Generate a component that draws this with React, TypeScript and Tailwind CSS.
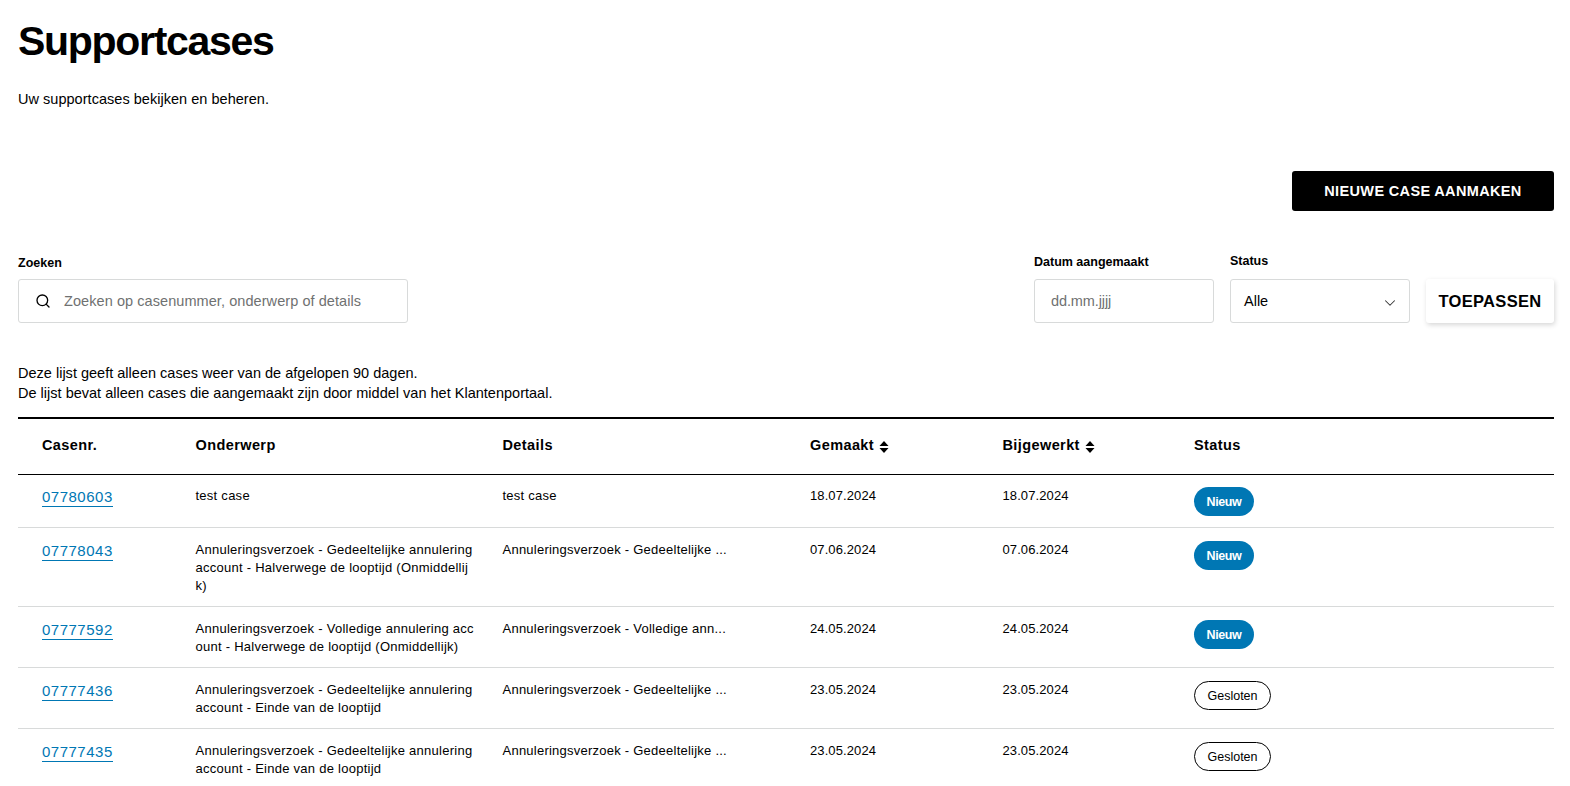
import { ChevronDown, Search } from 'lucide-react';

const cases = [
  { id: '07780603', subject: ['test case'], details: 'test case', created: '18.07.2024', updated: '18.07.2024', status: 'Nieuw', row: 'h-[53px] pt-3' },
  { id: '07778043', subject: ['Annuleringsverzoek - Gedeeltelijke annulering', 'account - Halverwege de looptijd (Onmiddellij', 'k)'], details: 'Annuleringsverzoek - Gedeeltelijke ...', created: '07.06.2024', updated: '07.06.2024', status: 'Nieuw', row: 'h-[79px] pt-[13px]' },
  { id: '07777592', subject: ['Annuleringsverzoek - Volledige annulering acc', 'ount - Halverwege de looptijd (Onmiddellijk)'], details: 'Annuleringsverzoek - Volledige ann...', created: '24.05.2024', updated: '24.05.2024', status: 'Nieuw', row: 'h-[61px] pt-[13px]' },
  { id: '07777436', subject: ['Annuleringsverzoek - Gedeeltelijke annulering', 'account - Einde van de looptijd'], details: 'Annuleringsverzoek - Gedeeltelijke ...', created: '23.05.2024', updated: '23.05.2024', status: 'Gesloten', row: 'h-[61px] pt-[13px]' },
  { id: '07777435', subject: ['Annuleringsverzoek - Gedeeltelijke annulering', 'account - Einde van de looptijd'], details: 'Annuleringsverzoek - Gedeeltelijke ...', created: '23.05.2024', updated: '23.05.2024', status: 'Gesloten', row: 'h-[61px] pt-[13px]' },
];

const gridCols = 'grid grid-cols-[153.5px_307px_307.5px_192.5px_191.5px_1fr] pl-6';

function SortIcon() {
  return (
    <svg width="10" height="12" viewBox="0 0 10 12" className="ml-[5px] mt-px" fill="#000">
      <path d="M5 0 L9.5 5 H0.5 Z" />
      <path d="M5 12 L9.5 7 H0.5 Z" />
    </svg>
  );
}

function StatusBadge({ status }: { status: string }) {
  if (status === 'Nieuw') {
    return (
      <span className="flex h-[29px] w-[60px] items-center justify-center rounded-full bg-[#0077b4] text-[12.5px] font-bold tracking-[-0.4px] text-white">
        {status}
      </span>
    );
  }
  return (
    <span className="flex h-[29px] w-[77px] items-center justify-center rounded-full border border-black text-[12.5px] tracking-normal text-black">
      {status}
    </span>
  );
}

export default function App() {
  return (
    <div className="h-[786px] overflow-hidden bg-white pr-4 pl-[18px] font-['Liberation_Sans',sans-serif] text-black">
      <h1 className="pt-[18px] text-[41px] leading-[47px] font-bold tracking-[-1.3px]">Supportcases</h1>
      <p className="mt-6 text-[14.5px] leading-[20px] tracking-[0.03px]">Uw supportcases bekijken en beheren.</p>

      <div className="mt-[62px] flex justify-end">
        <button className="h-10 w-[262px] rounded-[3px] bg-black pt-px text-[14.5px] font-bold tracking-[0.35px] text-white">
          NIEUWE CASE AANMAKEN
        </button>
      </div>

      {/* Filters */}
      <div className="mt-[42px] flex items-end">
        <div>
          <label className="block text-[12.5px] leading-[16px] font-bold">Zoeken</label>
          <div className="mt-2 flex h-11 w-[390px] items-center rounded-[3px] border border-[#d8dada] pl-4">
            <Search className="h-4 w-4 text-black" strokeWidth={2} />
            <span className="ml-[13px] pt-px text-[14.5px] tracking-[0.07px] text-[#6f7171]">Zoeken op casenummer, onderwerp of details</span>
          </div>
        </div>
        <div className="ml-auto">
          <label className="block text-[12.5px] leading-[16px] font-bold">Datum aangemaakt</label>
          <div className="mt-[9px] flex h-11 w-[180px] items-center rounded-[3px] border border-[#d8dada] pt-px pl-[16px] text-[14.5px] tracking-[-0.1px] text-[#6f7171]">
            dd.mm.jjjj
          </div>
        </div>
        <div className="ml-4">
          <label className="block text-[12.5px] leading-[16px] font-bold">Status</label>
          <div className="mt-[10px] flex h-11 w-[180px] items-center justify-between rounded-[3px] border border-[#d8dada] pt-px pr-[10px] pl-[13px] text-[14.5px]">
            Alle
            <ChevronDown className="mt-0.5 h-[18px] w-[18px] text-[#333]" strokeWidth={1.4} />
          </div>
        </div>
        <button className="ml-4 h-11 w-[128px] rounded-[3px] bg-white text-[16.5px] font-bold tracking-[0.3px] shadow-[1px_2px_5px_rgba(0,0,0,0.16)]">
          TOEPASSEN
        </button>
      </div>

      <p className="mt-[40px] text-[14.5px] leading-[20px] tracking-[0.01px]">
        Deze lijst geeft alleen cases weer van de afgelopen 90 dagen.
        <br />
        De lijst bevat alleen cases die aangemaakt zijn door middel van het Klantenportaal.
      </p>

      {/* Table */}
      <div className="mt-[14px] border-t-2 border-black">
        <div className={`${gridCols} h-14 items-center border-b border-black pb-px text-[14.5px] font-bold tracking-[0.4px]`}>
          <span>Casenr.</span>
          <span>Onderwerp</span>
          <span>Details</span>
          <span className="flex items-center">Gemaakt<SortIcon /></span>
          <span className="flex items-center">Bijgewerkt<SortIcon /></span>
          <span>Status</span>
        </div>
        {cases.map((c) => (
          <div key={c.id} className={`${gridCols} ${c.row} border-b border-[#d8dada] text-[13px] leading-[18px]`}>
            <div>
              <a href="#" className="mt-px inline-block border-b border-[#0077b4] text-[15px] leading-[18px] tracking-[0.5px] text-[#0077b4]">{c.id}</a>
            </div>
            <div className="whitespace-nowrap tracking-[0.26px]">
              {c.subject.map((line) => (
                <div key={line}>{line}</div>
              ))}
            </div>
            <div className="whitespace-nowrap tracking-[0.24px]">{c.details}</div>
            <div className="tracking-[0.1px]">{c.created}</div>
            <div className="tracking-[0.1px]">{c.updated}</div>
            <div><StatusBadge status={c.status} /></div>
          </div>
        ))}
      </div>
    </div>
  );
}
